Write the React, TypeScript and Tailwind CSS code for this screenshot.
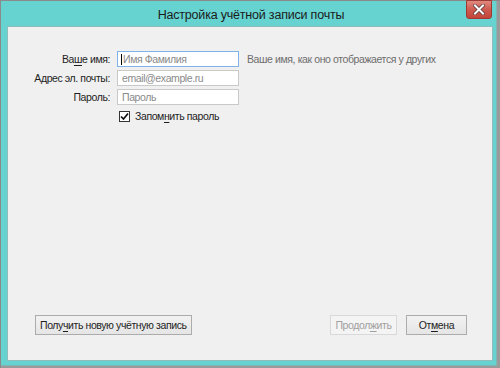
import React from "react";

const font = { fontFamily: '"Liberation Sans", Arial, sans-serif' };

function U({ children }: { children: React.ReactNode }) {
  return <span className="underline underline-offset-[2px]">{children}</span>;
}

export default function App() {
  return (
    <div
      className="w-[500px] h-[368px] bg-[#9a9a9a] border-l border-t border-[#8a8a8a] pr-[3px] pb-[2px] flex"
      style={font}
    >
      <div className="flex-1 flex flex-col bg-[#66d3d1] border-r border-b border-[#7fb5b4] pl-[6px] pr-[3px] pb-[4px]">
        <div className="h-[25px] relative flex items-center justify-center">
          <span className="text-[12.5px] tracking-[-0.2px] text-[#1b1b1b] pt-[3px] pl-[2px]">Настройка учётной записи почты</span>
          <div className="absolute right-[1px] top-[-1px] w-[26px] h-[19px] rounded-b-[3px] border border-[#9e3a33] bg-gradient-to-b from-[#e08a80] via-[#cf5a4f] to-[#c3453a] flex items-center justify-center">
            <svg width="12" height="11" viewBox="0 0 12 11">
              <path d="M2 1.5 L10 9.5 M10 1.5 L2 9.5" stroke="#5a3a3a" strokeWidth="3.6" strokeLinecap="square" />
              <path d="M2 1.5 L10 9.5 M10 1.5 L2 9.5" stroke="#ffffff" strokeWidth="2" strokeLinecap="square" />
            </svg>
          </div>
        </div>
        <div className="flex-1 flex flex-col bg-[#f0f0f0] border border-[#8ebdbc] text-[10.5px] leading-[16px] tracking-[-0.4px] text-[#1e1e1e]">
          <div className="pt-[24px] grid grid-cols-[102px_122px_auto] gap-x-[7px] gap-y-[3px] items-center">
            <div className="text-right"><span>Ва<U>ш</U>е имя:</span></div>
            <div className="h-[16px] border border-[#7eb4ea] bg-white flex items-center pl-[3px] text-[#8a8a8a]">
              <span className="w-px h-[11px] bg-black mr-[1px]" /><span>Имя Фамилия</span>
            </div>
            <div className="pl-[1px] text-[#6d6d6d]">Ваше имя, как оно отображается у других</div>

            <div className="text-right">Адрес эл. почты:</div>
            <div className="h-[16px] border border-[#c9c9c9] bg-white flex items-center pl-[4px] text-[#8a8a8a]">email@example.ru</div>
            <div />

            <div className="text-right">Пароль:</div>
            <div className="h-[16px] border border-[#c9c9c9] bg-white flex items-center pl-[4px] text-[#8a8a8a]">Пароль</div>
            <div />

            <div />
            <div className="col-span-2 h-[16px] flex items-center pl-[2px]">
              <div className="w-[11px] h-[11px] border border-[#333] bg-white flex items-center justify-center">
                <svg width="9" height="9" viewBox="0 0 9 9">
                  <path d="M1 4.5 L3.5 7 L8 1.5" stroke="#111" strokeWidth="1.7" fill="none" />
                </svg>
              </div>
              <span className="ml-[5px]">Запом<U>н</U>ить пароль</span>
            </div>
          </div>
          <div className="flex-1" />
          <div className="flex items-center pl-[27px] pr-[25px] pb-[25px]">
            <div className="h-[20px] px-[4px] border border-[#acacac] bg-gradient-to-b from-[#f2f2f2] to-[#e5e5e5] flex items-center w-[157px] whitespace-nowrap">
              <span>Полу<U>ч</U>ить новую учётную запись</span>
            </div>
            <div className="flex-1" />
            <div className="h-[20px] w-[67px] border border-[#d9d9d9] bg-[#f4f4f4] text-[#a0a0a0] flex items-center justify-center">
              <span>Продол<U>ж</U>ить</span>
            </div>
            <div className="h-[20px] w-[61px] ml-[9px] border border-[#acacac] bg-gradient-to-b from-[#f2f2f2] to-[#e5e5e5] flex items-center justify-center">
              <span>От<U>м</U>ена</span>
            </div>
          </div>
        </div>
      </div>
    </div>
  );
}
